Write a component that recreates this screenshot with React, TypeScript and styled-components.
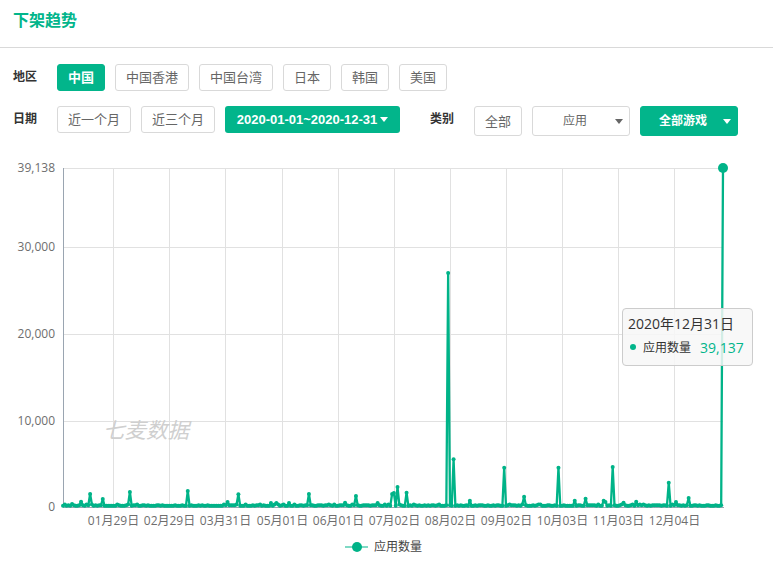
import React from "react";
import styled, { createGlobalStyle } from "styled-components";

const GREEN = "#02b58b";
const LINE = "#00b388";
const FONT = `"Open Sans", "Noto Sans CJK SC", sans-serif`;

const Global = createGlobalStyle`
  html, body { margin: 0; padding: 0; background: #fff; }
  body { font-family: ${FONT}; }
  * { box-sizing: border-box; }
`;

const Page = styled.div`
  width: 773px;
  height: 561px;
  overflow: hidden;
  background: #fff;
`;
const Header = styled.header`
  height: 48px;
  padding: 8px 13px 0;
  border-bottom: 1px solid #d9d9d9;
`;
const Title = styled.h2`
  margin: 0;
  font-size: 16px;
  line-height: 24px;
  font-weight: 700;
  color: ${GREEN};
`;
const Filters = styled.div`
  display: flex;
  flex-direction: column;
  gap: 15px;
  padding: 16px 0 0 13px;
`;
const Row = styled.div`
  display: flex;
  align-items: flex-start;
`;
const Label = styled.span<{ $first?: boolean }>`
  width: 44px;
  margin-left: ${(p) => (p.$first ? "0" : "30px")};
  font-size: 12px;
  font-weight: 700;
  line-height: 25px;
  color: #333;
`;
const Group = styled.div`
  display: flex;
  gap: 10px;
`;
const Chip = styled.button<{ $active?: boolean; $tall?: boolean }>`
  height: ${(p) => (p.$tall ? "30px" : "27px")};
  padding: 0 10px;
  font-family: inherit;
  font-size: 13px;
  line-height: 1;
  border-radius: 3px;
  border: 1px solid ${(p) => (p.$active ? GREEN : "#d9d9d9")};
  background: ${(p) => (p.$active ? GREEN : "#fff")};
  color: ${(p) => (p.$active ? "#fff" : "#666")};
  font-weight: ${(p) => (p.$active ? 700 : 400)};
`;
const DateButton = styled.button`
  display: flex;
  align-items: center;
  justify-content: center;
  gap: 3px;
  width: 175px;
  height: 27px;
  margin-left: 10px;
  padding: 0;
  border: 0;
  border-radius: 3px;
  background: ${GREEN};
  color: #fff;
  font-family: "Liberation Sans", Arial, sans-serif;
  font-size: 13px;
  font-weight: 700;
`;
const Caret = styled.i<{ $color: string }>`
  display: block;
  width: 0;
  height: 0;
  border-left: 4.5px solid transparent;
  border-right: 4.5px solid transparent;
  border-top: 5px solid ${(p) => p.$color};
`;
const CategorySelect = styled.div<{ $primary?: boolean }>`
  display: flex;
  align-items: center;
  justify-content: space-between;
  width: 98px;
  height: 30px;
  margin-left: 10px;
  padding: 0 6px 0 ${(p) => (p.$primary ? "18px" : "30px")};
  border-radius: 3px;
  border: 1px solid ${(p) => (p.$primary ? GREEN : "#d9d9d9")};
  background: ${(p) => (p.$primary ? GREEN : "#fff")};
  color: ${(p) => (p.$primary ? "#fff" : "#666")};
  font-size: 12px;
  line-height: 28px;
  font-weight: ${(p) => (p.$primary ? 700 : 400)};
`;
const ChartArea = styled.div`
  position: relative;
  width: 773px;
  height: 425px;
`;
const Plot = styled.svg`
  display: block;
`;
const AxisText = styled.text`
  font-family: ${FONT};
  font-size: 12px;
  fill: #6e6e6e;
`;
const Watermark = styled.span`
  position: absolute;
  left: 103px;
  top: 279px;
  font-size: 21.5px;
  line-height: 30px;
  font-style: italic;
  color: #cfcfcf;
`;
const Tooltip = styled.div`
  position: absolute;
  left: 622px;
  top: 172px;
  width: 131px;
  height: 58px;
  padding: 5px 5px;
  border: 1px solid #ccc;
  border-radius: 4px;
  background: rgba(247, 247, 247, 0.85);
  color: #333;
`;
const TipTitle = styled.div`
  font-size: 14px;
  line-height: 20px;
`;
const TipRow = styled.div`
  display: flex;
  align-items: center;
  height: 20px;
  margin-top: 3px;
  font-size: 12px;
`;
const TipDot = styled.i`
  width: 6px;
  height: 6px;
  margin: 0 7px 0 2px;
  border-radius: 50%;
  background: ${GREEN};
`;
const TipValue = styled.b`
  margin-left: 9px;
  font-size: 14px;
  font-weight: 400;
  color: ${GREEN};
`;
const Legend = styled.div`
  position: absolute;
  left: 345px;
  top: 401px;
  display: flex;
  align-items: center;
  gap: 6px;
  font-size: 12px;
  line-height: 20px;
  color: #444;
`;

// Chart geometry, in the coordinates of the page.
const TOP = 136; // offset of ChartArea on the page
const X0 = 63;
const X1 = 723;
const Y0 = 507;
const Y_TOP = 168;

const spikes: [number, number][] = [
  [72, 504], [81, 501.7], [90, 494], [102.7, 499], [130, 492], [187.7, 491], [226.7, 502], [238.3, 494.3],
  [271, 503], [276, 503], [289, 503], [309, 494], [345.7, 502.7], [356, 496], [377.7, 503],
  [392, 494], [394, 493], [397.3, 487], [406.3, 492.7], [448, 273], [453.3, 459.3], [469.7, 500.7],
  [504, 467.7], [524, 496.7], [558.3, 467.7], [574.7, 500.7], [585.3, 498.7], [603.3, 500.7],
  [605.5, 502], [612.7, 467], [623.7, 502.7], [636.3, 501.7], [668.7, 482.7], [675.7, 502],
  [688.3, 498],
];

const points: [number, number][] = (() => {
  const dx = (X1 - X0) / 365;
  const ys: number[] = [];
  for (let i = 0; i <= 365; i++) {
    const n = Math.sin(i * 12.9898) * 43758.5453;
    const r = n - Math.floor(n);
    ys.push(r > 0.9 ? 504.5 : r > 0.5 ? 505.3 : 505.8);
  }
  for (const [sx, sy] of spikes) ys[Math.round((sx - X0) / dx)] = sy;
  ys[365] = Y_TOP;
  return ys.map((y, i) => [X0 + i * dx, y - TOP] as [number, number]);
})();

const vGrid = [113, 169, 225, 282, 338, 394, 450, 506, 562, 618, 674];
const xLabels = ["01月29日", "02月29日", "03月31日", "05月01日", "06月01日", "07月02日", "08月02日", "09月02日", "10月03日", "11月03日", "12月04日"];
const yTicks: [string, number][] = [["0", 507], ["10,000", 421], ["20,000", 334], ["30,000", 247], ["39,138", 168]];

const Chart = () => (
  <Plot width={773} height={425} viewBox="0 0 773 425">
    {yTicks.map(([t, y]) => (
      <g key={t}>
        <line x1={X0} x2={723} y1={y - TOP + 0.5} y2={y - TOP + 0.5} stroke="#e1e1e1" />
        <AxisText x={55} y={y - TOP + 4} textAnchor="end">{t}</AxisText>
      </g>
    ))}
    {vGrid.map((x, i) => (
      <g key={x}>
        <line x1={x + 0.5} x2={x + 0.5} y1={Y_TOP - TOP} y2={Y0 - TOP} stroke="#e1e1e1" />
        <AxisText x={x + 0.5} y={Y0 - TOP + 18} textAnchor="middle">{xLabels[i]}</AxisText>
      </g>
    ))}
    <line x1={63.5} x2={63.5} y1={Y_TOP - TOP} y2={Y0 - TOP + 1} stroke="#9aa5b1" />
    <line x1={63} x2={724} y1={Y0 - TOP + 0.5} y2={Y0 - TOP + 0.5} stroke="#9aa5b1" />
    <polyline
      points={points.map((p) => p.join(",")).join(" ")}
      fill="none"
      stroke={LINE}
      strokeWidth={2.3}
      strokeLinejoin="round"
    />
    {points.map(([x, y], i) => (
      <circle key={i} cx={x} cy={y} r={i === 365 ? 5 : 2} fill={LINE} />
    ))}
  </Plot>
);

const LegendMark = () => (
  <svg width="23" height="14" viewBox="0 0 23 14">
    <line x1="0" x2="23" y1="7" y2="7" stroke="#7fd9c4" strokeWidth="2" />
    <circle cx="12" cy="7" r="5" fill={LINE} />
  </svg>
);

export default function App() {
  return (
    <Page>
      <Global />
      <Header>
        <Title>下架趋势</Title>
      </Header>
      <Filters>
        <Row>
          <Label $first>地区</Label>
          <Group>
            <Chip $active>中国</Chip>
            <Chip>中国香港</Chip>
            <Chip>中国台湾</Chip>
            <Chip>日本</Chip>
            <Chip>韩国</Chip>
            <Chip>美国</Chip>
          </Group>
        </Row>
        <Row>
          <Label $first>日期</Label>
          <Group>
            <Chip>近一个月</Chip>
            <Chip>近三个月</Chip>
          </Group>
          <DateButton>
            2020-01-01~2020-12-31
            <Caret $color="#fff" />
          </DateButton>
          <Label>类别</Label>
          <Chip $tall>全部</Chip>
          <CategorySelect>
            应用
            <Caret $color="#666" />
          </CategorySelect>
          <CategorySelect $primary>
            全部游戏
            <Caret $color="#fff" />
          </CategorySelect>
        </Row>
      </Filters>
      <ChartArea>
        <Chart />
        <Watermark>七麦数据</Watermark>
        <Tooltip>
          <TipTitle>2020年12月31日</TipTitle>
          <TipRow>
            <TipDot />
            应用数量
            <TipValue>39,137</TipValue>
          </TipRow>
        </Tooltip>
        <Legend>
          <LegendMark />
          应用数量
        </Legend>
      </ChartArea>
    </Page>
  );
}
